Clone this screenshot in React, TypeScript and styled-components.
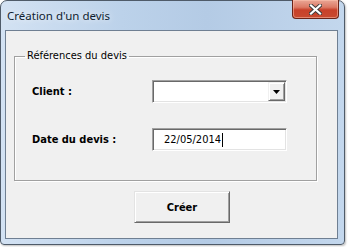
import styled, { createGlobalStyle } from 'styled-components';

const GlobalStyle = createGlobalStyle`
  html, body {
    margin: 0;
    padding: 0;
    background: #ffffff;
  }
`;

const Screen = styled.div`
  width: 348px;
  height: 247px;
  overflow: hidden;
  background: #ffffff;
`;

const Window = styled.div`
  box-sizing: border-box;
  width: 345px;
  height: 245px;
  display: flex;
  flex-direction: column;
  padding: 0 6px 5px 4px;
  border: 1px solid #4f5b69;
  border-radius: 7px 7px 4px 4px;
  background: linear-gradient(90deg, #d3e2f3 0%, #bcd2ea 35%, #b4cbe5 60%, #c3d7ed 100%);
  box-shadow: 1px 1px 2px rgba(0, 0, 0, 0.25);
`;

const TitleBar = styled.div`
  height: 29px;
  display: flex;
  align-items: flex-start;
  justify-content: space-between;
`;

const Title = styled.span`
  margin: 7px 0 0 2px;
  font-family: 'Noto Sans', 'Open Sans', sans-serif;
  font-size: 11.5px;
  color: #0f1d30;
  text-shadow: 0 0 6px rgba(255, 255, 255, 0.9);
`;

const CloseButton = styled.div`
  box-sizing: border-box;
  width: 47px;
  height: 19px;
  margin: -1px -1px 0 0;
  display: flex;
  align-items: center;
  justify-content: center;
  border: 1px solid #6b2418;
  border-top: none;
  border-radius: 0 0 4px 4px;
  background: linear-gradient(180deg, #eaa796 0%, #dc7a66 40%, #c8412a 55%, #c84a30 100%);
  box-shadow: inset 0 0 0 1px rgba(255, 200, 180, 0.5);
`;

const Client = styled.div`
  flex: 1;
  display: flex;
  flex-direction: column;
  align-items: flex-start;
  padding-top: 18px;
  border: 1px solid #6f7f92;
  background: #f0f0f0;
`;

const GroupBox = styled.fieldset`
  box-sizing: border-box;
  width: 303px;
  margin: 0 0 0 8px;
  padding: 17px 0 29px 17px;
  border: 1px solid #a0a0a0;
  box-shadow: 1px 1px 0 #ffffff, inset 1px 1px 0 #ffffff;
`;

const Legend = styled.legend`
  margin-left: -7px;
  padding: 0 2px;
  font-family: 'DejaVu Sans Condensed', 'DejaVu Sans', sans-serif;
  font-size: 11px;
  line-height: 14px;
  color: #000;
`;

const FormGrid = styled.div`
  display: grid;
  grid-template-columns: 120px 135px;
  grid-auto-rows: 23px;
  row-gap: 25px;
  align-items: center;
`;

const Label = styled.span`
  font-family: 'DejaVu Sans Condensed', 'DejaVu Sans', sans-serif;
  font-weight: bold;
  font-size: 11px;
  color: #000;
`;

const Sunken = styled.div`
  box-sizing: border-box;
  height: 23px;
  display: flex;
  align-items: center;
  justify-content: space-between;
  border: 1px solid;
  border-color: #a0a0a0 #ffffff #ffffff #a0a0a0;
  box-shadow: inset 1px 1px 0 #696969, inset -1px -1px 0 #e3e3e3;
  background: #ffffff;
`;

const DropButton = styled.div`
  box-sizing: border-box;
  width: 17px;
  height: 19px;
  margin-right: 1px;
  display: flex;
  align-items: center;
  justify-content: center;
  background: #f0f0f0;
  border: 1px solid;
  border-color: #f0f0f0 #696969 #696969 #f0f0f0;
  box-shadow: inset 1px 1px 0 #ffffff, inset -1px -1px 0 #a0a0a0;
`;

const DateText = styled.span`
  display: flex;
  align-items: center;
  margin-left: 11px;
  font-family: 'DejaVu Sans Condensed', 'DejaVu Sans', sans-serif;
  font-size: 11px;
  color: #000;
`;

const Caret = styled.span`
  width: 1px;
  height: 14px;
  margin-left: 1px;
  background: #000;
`;

const Footer = styled.div`
  align-self: stretch;
  display: flex;
  padding: 10px 0 0 128px;
`;

const Button = styled.button`
  box-sizing: border-box;
  width: 96px;
  height: 32px;
  padding: 0;
  font-family: 'DejaVu Sans Condensed', 'DejaVu Sans', sans-serif;
  font-weight: bold;
  font-size: 11px;
  color: #000;
  background: #f0f0f0;
  border: 1px solid;
  border-color: #e3e3e3 #696969 #696969 #e3e3e3;
  box-shadow: inset 1px 1px 0 #ffffff, inset -1px -1px 0 #a0a0a0;
`;

const CloseIcon = () => (
  <svg width="13" height="11" viewBox="0 0 13 11">
    <path d="M2 1.5 L11 9.5 M11 1.5 L2 9.5" stroke="#3b3b3b" strokeWidth="4" strokeLinecap="square" />
    <path d="M2 1.5 L11 9.5 M11 1.5 L2 9.5" stroke="#ffffff" strokeWidth="2.2" strokeLinecap="square" />
  </svg>
);

const ArrowIcon = () => (
  <svg width="7" height="4" viewBox="0 0 7 4">
    <path d="M0 0 H7 L3.5 4 Z" fill="#000" />
  </svg>
);

const App = () => (
  <>
    <GlobalStyle />
    <Screen>
      <Window>
        <TitleBar>
          <Title>Création d'un devis</Title>
          <CloseButton>
            <CloseIcon />
          </CloseButton>
        </TitleBar>
        <Client>
          <GroupBox>
            <Legend>Références du devis</Legend>
            <FormGrid>
              <Label>Client :</Label>
              <Sunken>
                <span />
                <DropButton>
                  <ArrowIcon />
                </DropButton>
              </Sunken>
              <Label>Date du devis :</Label>
              <Sunken>
                <DateText>
                  22/05/2014
                  <Caret />
                </DateText>
              </Sunken>
            </FormGrid>
          </GroupBox>
          <Footer>
            <Button>Créer</Button>
          </Footer>
        </Client>
      </Window>
    </Screen>
  </>
);

export default App;
